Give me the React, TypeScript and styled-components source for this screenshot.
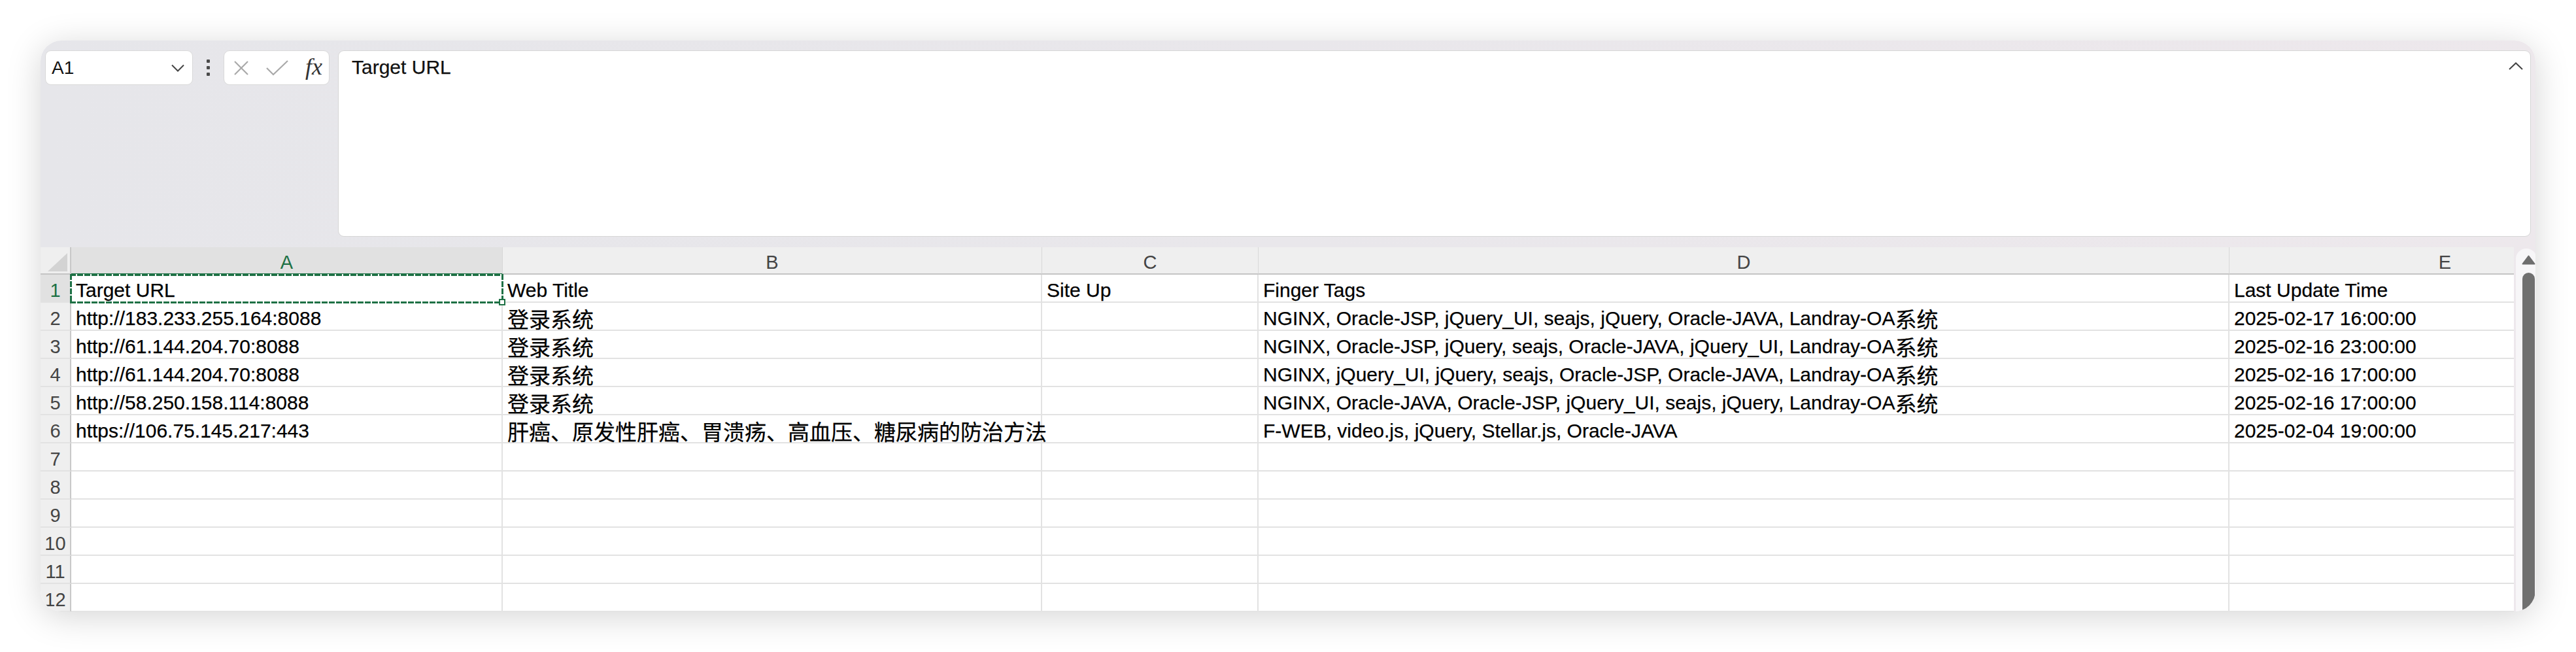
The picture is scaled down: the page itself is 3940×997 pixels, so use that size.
import React from "react";
import styled, { createGlobalStyle } from "styled-components";

const GREEN = "#1e7145";

const GlobalStyle = createGlobalStyle`
  html, body {
    margin: 0;
    padding: 0;
    background: #fff;
  }
  body {
    font-family: "Liberation Sans", Arial, sans-serif;
  }
`;

const Page = styled.div`
  width: 3940px;
  height: 997px;
  box-sizing: border-box;
  padding: 62px;
  background: #fff;
  overflow: hidden;
`;

const Window = styled.div`
  height: 100%;
  border-radius: 32px;
  background: linear-gradient(90deg, #e6e6ea 0%, #e9e7eb 50%, #ede8ec 100%);
  box-shadow: 0 8px 52px rgba(0, 0, 0, 0.17);
  overflow: hidden;
  display: flex;
  flex-direction: column;
`;

const FormulaBar = styled.div`
  display: flex;
  align-items: flex-start;
  height: 300px;
  box-sizing: border-box;
  padding: 15px 7px 0;
`;

const NameBox = styled.div`
  width: 226px;
  height: 53px;
  box-sizing: border-box;
  background: #fff;
  border: 1px solid #d9d9d9;
  border-radius: 9px;
  display: flex;
  align-items: center;
  justify-content: space-between;
  padding: 0 12px 0 9px;
  font-size: 28px;
  color: #111;
`;

const Dots = styled.div`
  width: 47px;
  height: 53px;
  display: flex;
  flex-direction: column;
  align-items: center;
  justify-content: center;
  gap: 5px;
`;

const Dot = styled.span`
  width: 5px;
  height: 5px;
  border-radius: 1px;
  background: #4a4a4a;
`;

const FnBox = styled.div`
  width: 162px;
  height: 53px;
  box-sizing: border-box;
  background: #fff;
  border: 1px solid #d9d9d9;
  border-radius: 9px;
  display: flex;
  align-items: center;
  justify-content: space-between;
  padding: 0 10px 0 14px;
`;

const Fx = styled.span`
  font-family: "Liberation Serif", "Times New Roman", serif;
  font-style: italic;
  font-size: 36px;
  line-height: 36px;
  color: #333;
  margin-top: -4px;
`;

const FormulaInput = styled.div`
  flex: 1;
  margin-left: 13px;
  height: 285px;
  box-sizing: border-box;
  background: #fff;
  border: 1px solid #d6d6d6;
  border-radius: 9px;
  padding: 8px 11px 0 20px;
  display: flex;
  justify-content: space-between;
  align-items: flex-start;
  font-size: 30px;
  line-height: 34px;
  color: #111;
  -webkit-text-stroke: 0.25px #111;
`;

const Caret = styled.svg`
  margin-top: 9px;
`;

const Sheet = styled.div`
  flex: 1;
  min-height: 0;
  margin-top: 16px;
  display: flex;
`;

const Grid = styled.div`
  flex: 1;
  min-width: 0;
  overflow: hidden;
  background: #fff;
  display: grid;
  grid-template-columns: 47px 660px 825px 331px 1485px 660px;
  grid-template-rows: 42px;
  grid-auto-rows: 43px;
  align-content: start;
`;

const Corner = styled.div`
  box-sizing: border-box;
  background: #efefef;
  border-right: 2px solid #c8c8c8;
  border-bottom: 2px solid #c4c4c4;
  display: flex;
  align-items: flex-end;
  justify-content: flex-end;
  padding: 0 4px 3px 0;
`;

const CornerMark = styled.span`
  width: 30px;
  height: 28px;
  background: #d3d3d3;
  clip-path: polygon(100% 0, 100% 100%, 0 100%);
`;

const ColHead = styled.div<{ $active?: boolean }>`
  box-sizing: border-box;
  background: ${(p) => (p.$active ? "#e1e1e1" : "#efefef")};
  color: ${(p) => (p.$active ? GREEN : "#444")};
  border-right: 1px solid #d8d8d8;
  border-bottom: 2px solid ${(p) => (p.$active ? GREEN : "#c4c4c4")};
  display: flex;
  align-items: flex-end;
  justify-content: center;
  font-size: 29px;
  line-height: 34px;
`;

const RowHead = styled.div<{ $active?: boolean }>`
  box-sizing: border-box;
  background: ${(p) => (p.$active ? "#e1e1e1" : "#efefef")};
  color: ${(p) => (p.$active ? GREEN : "#444")};
  border-right: 2px solid #c8c8c8;
  border-bottom: 2px solid #e2e2e2;
  display: flex;
  align-items: flex-end;
  justify-content: center;
  padding-bottom: 0;
  font-size: 29px;
  line-height: 34px;
`;

const Cell = styled.div`
  position: relative;
  box-sizing: border-box;
  border-right: 2px solid #e2e2e2;
  border-bottom: 2px solid #e2e2e2;
  padding: 0 0 0 7px;
  display: flex;
  align-items: flex-end;
  white-space: nowrap;
  font-size: 30px;
  line-height: 34px;
  color: #000;
  -webkit-text-stroke: 0.25px #000;
`;

const Han = styled.span`
  font-family: "Noto Sans CJK SC", sans-serif;
  font-size: 33px;
  font-weight: 400;
`;

const Marquee = styled.span`
  position: absolute;
  top: -1px;
  left: -2px;
  right: -3px;
  bottom: -3px;
  z-index: 2;
  background:
    repeating-linear-gradient(90deg, ${GREEN} 0 9px, #fff 9px 11px) top left / 100% 3px no-repeat,
    repeating-linear-gradient(90deg, ${GREEN} 0 9px, #fff 9px 11px) bottom left / 100% 3px no-repeat,
    repeating-linear-gradient(180deg, ${GREEN} 0 9px, #fff 9px 11px) top left / 3px 100% no-repeat,
    repeating-linear-gradient(180deg, ${GREEN} 0 9px, #fff 9px 11px) top right / 3px 100% no-repeat;
`;

const Handle = styled.span`
  position: absolute;
  right: -3px;
  bottom: -3px;
  width: 6px;
  height: 6px;
  background: #fff;
  border: 2px solid ${GREEN};
`;

const Gutter = styled.div`
  width: 33px;
  box-sizing: border-box;
  padding: 2px 0 0 3px;
  display: flex;
`;

const Track = styled.div`
  flex: 1;
  background: #f7f6f8;
  border-radius: 16px 16px 0 0;
  padding: 10px 2px 0 9px;
  display: flex;
  flex-direction: column;
`;

const Thumb = styled.div`
  flex: 1;
  width: 19px;
  margin: 12px 0 0 1px;
  background: #707070;
  border-radius: 10px 10px 0 0;
`;

const columns = ["A", "B", "C", "D", "E"];

const rows: string[][] = [
  ["Target URL", "Web Title", "Site Up", "Finger Tags", "Last Update Time"],
  [
    "http://183.233.255.164:8088",
    "登录系统",
    "",
    "NGINX, Oracle-JSP, jQuery_UI, seajs, jQuery, Oracle-JAVA, Landray-OA系统",
    "2025-02-17 16:00:00",
  ],
  [
    "http://61.144.204.70:8088",
    "登录系统",
    "",
    "NGINX, Oracle-JSP, jQuery, seajs, Oracle-JAVA, jQuery_UI, Landray-OA系统",
    "2025-02-16 23:00:00",
  ],
  [
    "http://61.144.204.70:8088",
    "登录系统",
    "",
    "NGINX, jQuery_UI, jQuery, seajs, Oracle-JSP, Oracle-JAVA, Landray-OA系统",
    "2025-02-16 17:00:00",
  ],
  [
    "http://58.250.158.114:8088",
    "登录系统",
    "",
    "NGINX, Oracle-JAVA, Oracle-JSP, jQuery_UI, seajs, jQuery, Landray-OA系统",
    "2025-02-16 17:00:00",
  ],
  [
    "https://106.75.145.217:443",
    "肝癌、原发性肝癌、胃溃疡、高血压、糖尿病的防治方法",
    "",
    "F-WEB, video.js, jQuery, Stellar.js, Oracle-JAVA",
    "2025-02-04 19:00:00",
  ],
];

const TOTAL_ROWS = 12;

// wrap runs of chinese chars so they get the CJK face at Excel's size
const renderText = (text: string) =>
  text
    .split(/([\u3000-\u303f\u4e00-\u9fff]+)/)
    .filter(Boolean)
    .map((part, i) =>
      /[\u3000-\u9fff]/.test(part) ? <Han key={i}>{part}</Han> : <React.Fragment key={i}>{part}</React.Fragment>
    );

const App: React.FC = () => {
  return (
    <>
      <GlobalStyle />
      <Page>
        <Window>
          <FormulaBar>
            <NameBox>
              <span>A1</span>
              <svg width="20" height="12" viewBox="0 0 20 12">
                <polyline points="1,1.5 10,10.5 19,1.5" fill="none" stroke="#444" strokeWidth="2" />
              </svg>
            </NameBox>
            <Dots>
              <Dot />
              <Dot />
              <Dot />
            </Dots>
            <FnBox>
              <svg width="24" height="24" viewBox="0 0 24 24">
                <path d="M2 2 L22 22 M22 2 L2 22" stroke="#a9a9a9" strokeWidth="2.2" fill="none" />
              </svg>
              <svg width="36" height="26" viewBox="0 0 36 26">
                <polyline points="2,13 12,23 34,2" stroke="#a9a9a9" strokeWidth="2.2" fill="none" />
              </svg>
              <Fx>fx</Fx>
            </FnBox>
            <FormulaInput>
              <span>Target URL</span>
              <Caret width="22" height="12" viewBox="0 0 22 12">
                <polyline points="1,11 11,1.5 21,11" fill="none" stroke="#444" strokeWidth="2" />
              </Caret>
            </FormulaInput>
          </FormulaBar>
          <Sheet>
            <Grid>
              <Corner>
                <CornerMark />
              </Corner>
              {columns.map((c) => (
                <ColHead key={c} $active={c === "A"}>
                  {c}
                </ColHead>
              ))}
              {Array.from({ length: TOTAL_ROWS }).map((_, r) => (
                <React.Fragment key={r}>
                  <RowHead $active={r === 0}>{r + 1}</RowHead>
                  {columns.map((c, ci) => (
                    <Cell key={c}>
                      {renderText(rows[r]?.[ci] ?? "")}
                      {r === 0 && ci === 0 && (
                        <Marquee>
                          <Handle />
                        </Marquee>
                      )}
                    </Cell>
                  ))}
                </React.Fragment>
              ))}
            </Grid>
            <Gutter>
              <Track>
                <svg width="21" height="15" viewBox="0 0 21 15">
                  <path d="M10.5 1.5 L19.5 13.5 H1.5 Z" fill="#6e6e6e" stroke="#6e6e6e" strokeWidth="2" strokeLinejoin="round" />
                </svg>
                <Thumb />
              </Track>
            </Gutter>
          </Sheet>
        </Window>
      </Page>
    </>
  );
};

export default App;
